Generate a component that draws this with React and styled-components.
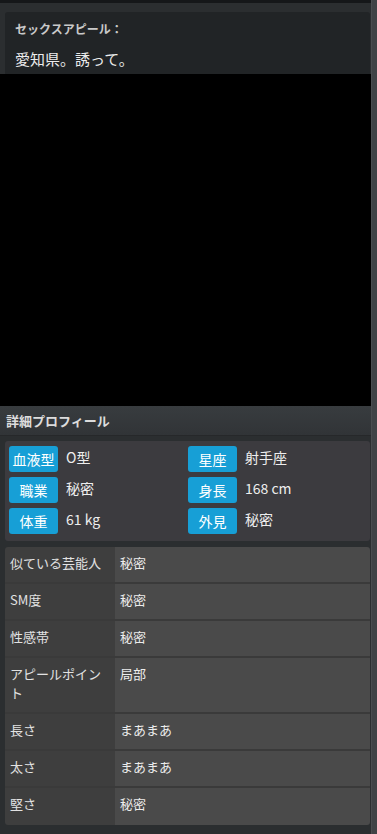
import React from "react";
import styled, { createGlobalStyle } from "styled-components";

const GlobalStyle = createGlobalStyle`
  html, body {
    margin: 0;
    padding: 0;
    background: #2b2e30;
  }
  body {
    font-family: "Noto Sans CJK JP", "Noto Sans", sans-serif;
    color: #e6e6e6;
  }
`;

const Page = styled.div`
  display: flex;
  width: 377px;
  min-height: 834px;
  background: #2b2e30;
`;

const Main = styled.div`
  flex: 1;
  display: flex;
  flex-direction: column;
`;

const ScrollStrip = styled.div`
  width: 5px;
  background: #404346;
  border-left: 1px solid #4a4d50;
`;

const TopBar = styled.div`
  height: 3px;
  background: #151719;
  margin-bottom: 9px;
`;

const Card = styled.section`
  margin: 0 1px 0 5px;
  height: 62px;
  overflow: hidden;
  background: #212426;
  border-radius: 3px 3px 0 0;
  padding: 0 10px;
`;

const CardTitle = styled.div`
  font-size: 12px;
  font-weight: bold;
  color: #c9c9c9;
  line-height: 16px;
  padding-top: 9px;
`;

const CardText = styled.div`
  font-size: 15px;
  line-height: 20px;
  margin-top: 12px;
  color: #ececec;
`;

const Media = styled.div`
  height: 332px;
  background: #000;
  margin-right: -6px;
`;

const SectionHead = styled.div`
  height: 29px;
  background: linear-gradient(#383c3f, #313437);
  border-bottom: 1px solid #26282a;
  padding-left: 6px;
  font-size: 13px;
  font-weight: bold;
  line-height: 30px;
  color: #dcdcdc;
`;

const Panel = styled.div`
  margin: 5px 1px 0 5px;
  background: #3c3b3f;
  border-radius: 3px;
  padding: 5px 4px 7px;
  display: grid;
  grid-template-columns: 179px 1fr;
  row-gap: 5px;
`;

const Item = styled.div`
  display: flex;
  align-items: center;
  gap: 8px;
`;

const Badge = styled.span`
  width: 49px;
  height: 26px;
  border-radius: 3px;
  background: #179fd6;
  color: #fff;
  font-size: 14px;
  line-height: 26px;
  text-align: center;
`;

const ItemValue = styled.span`
  font-size: 14px;
  color: #eeeeee;
  margin-top: -4px;
`;

const Table = styled.div`
  margin: 6px 1px 8px 5px;
  border-radius: 3px;
  overflow: hidden;
  display: grid;
  grid-template-columns: 110px 1fr;
`;

const Cell = styled.div`
  font-size: 13px;
  line-height: 19px;
  padding: 6px 5px 10px;
  border-bottom: ${(p) => (p.$last ? "none" : "2px solid #3a3a3a")};
  background: ${(p) => (p.$head ? "#3e3e3e" : "#4a4a4a")};
  color: ${(p) => (p.$head ? "#e2e2e2" : "#ececec")};
  padding-left: ${(p) => (p.$head ? "5px" : "5px")};
  ${(p) => p.$last && "padding-bottom: 12px;"}
`;

const basics = [
  ["血液型", "O型", "星座", "射手座"],
  ["職業", "秘密", "身長", "168 cm"],
  ["体重", "61 kg", "外見", "秘密"],
];

const details = [
  ["似ている芸能人", "秘密"],
  ["SM度", "秘密"],
  ["性感帯", "秘密"],
  ["アピールポイント", "局部"],
  ["長さ", "まあまあ"],
  ["太さ", "まあまあ"],
  ["堅さ", "秘密"],
];

export default function App() {
  return (
    <>
      <GlobalStyle />
      <Page>
        <Main>
          <TopBar />
          <Card>
            <CardTitle>セックスアピール：</CardTitle>
            <CardText>愛知県。誘って。</CardText>
          </Card>
          <Media />
          <SectionHead>詳細プロフィール</SectionHead>
          <Panel>
            {basics.map(([a, av, b, bv]) => (
              <React.Fragment key={a}>
                <Item>
                  <Badge>{a}</Badge>
                  <ItemValue>{av}</ItemValue>
                </Item>
                <Item>
                  <Badge>{b}</Badge>
                  <ItemValue>{bv}</ItemValue>
                </Item>
              </React.Fragment>
            ))}
          </Panel>
          <Table>
            {details.map(([k, v], i) => (
              <React.Fragment key={k}>
                <Cell $head $last={i === details.length - 1}>{k}</Cell>
                <Cell $last={i === details.length - 1}>{v}</Cell>
              </React.Fragment>
            ))}
          </Table>
        </Main>
        <ScrollStrip />
      </Page>
    </>
  );
}
